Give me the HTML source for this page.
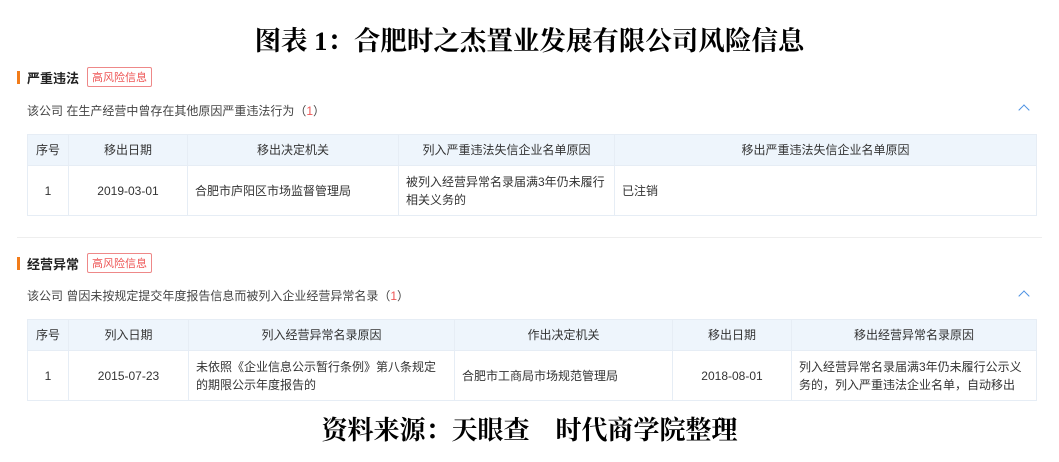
<html><head><style>
body{margin:0;width:1059px;height:462px;background:#fff;position:relative;font-family:"Liberation Sans","Noto Sans CJK SC",sans-serif;color:#333;font-size:12px;overflow:hidden}
.t{position:absolute;left:0;width:1059px;text-align:center;font-family:"Liberation Serif","Noto Serif CJK SC",serif;font-weight:bold;font-size:26.5px;color:#000}
.h{position:absolute;left:17px;font-weight:bold;font-size:13px;color:#222;display:flex;align-items:center}
.h:before{content:"";width:3px;height:13px;background:#f27c1a;margin-right:7px}
.tag{margin-left:8px;border:1px solid #e88;color:#e55;font-weight:normal;font-size:11px;padding:1px 4px;border-radius:2px}
.d{position:absolute;left:27px;font-size:12px;color:#444}
.d span{color:#e55}
.up{position:absolute;left:1020px;width:7px;height:7px;border-left:1.5px solid #4a90e2;border-top:1.5px solid #4a90e2;transform:rotate(45deg)}
table{position:absolute;left:27px;width:1010px;border-collapse:collapse;table-layout:fixed}
td{border:1px solid #e6edf5;padding:0 7px;line-height:18px;font-size:12px;color:#333}
tr.hd td{background:#eef5fc;height:31px;text-align:center}
tr.r td{height:50px}
.c{text-align:center}
</style></head><body>
<div class="t" style="top:19px">图表 1：合肥时之杰置业发展有限公司风险信息</div>
<div class="h" style="top:67px">严重违法<span class="tag">高风险信息</span></div>
<div class="d" style="top:102px">该公司 在生产经营中曾存在其他原因严重违法行为（<span>1</span>）</div>
<div class="up" style="top:106px"></div>
<table style="top:134px"><colgroup><col style="width:41px"><col style="width:119px"><col style="width:211px"><col style="width:216px"><col></colgroup>
<tr class="hd"><td>序号</td><td>移出日期</td><td>移出决定机关</td><td>列入严重违法失信企业名单原因</td><td>移出严重违法失信企业名单原因</td></tr>
<tr class="r"><td class="c">1</td><td class="c">2019-03-01</td><td>合肥市庐阳区市场监督管理局</td><td>被列入经营异常名录届满3年仍未履行相关义务的</td><td>已注销</td></tr></table>
<div style="position:absolute;left:17px;top:237px;width:1025px;height:1px;background:#eee"></div>
<div class="h" style="top:253px">经营异常<span class="tag">高风险信息</span></div>
<div class="d" style="top:287px">该公司 曾因未按规定提交年度报告信息而被列入企业经营异常名录（<span>1</span>）</div>
<div class="up" style="top:292px"></div>
<table style="top:319px"><colgroup><col style="width:41px"><col style="width:120px"><col style="width:266px"><col style="width:218px"><col style="width:119px"><col></colgroup>
<tr class="hd"><td>序号</td><td>列入日期</td><td>列入经营异常名录原因</td><td>作出决定机关</td><td>移出日期</td><td>移出经营异常名录原因</td></tr>
<tr class="r"><td class="c">1</td><td class="c">2015-07-23</td><td>未依照《企业信息公示暂行条例》第八条规定的期限公示年度报告的</td><td>合肥市工商局市场规范管理局</td><td class="c">2018-08-01</td><td>列入经营异常名录届满3年仍未履行公示义务的，列入严重违法企业名单，自动移出</td></tr></table>
<div class="t" style="top:410px;font-size:26px">资料来源：天眼查　时代商学院整理</div>
</body></html>
